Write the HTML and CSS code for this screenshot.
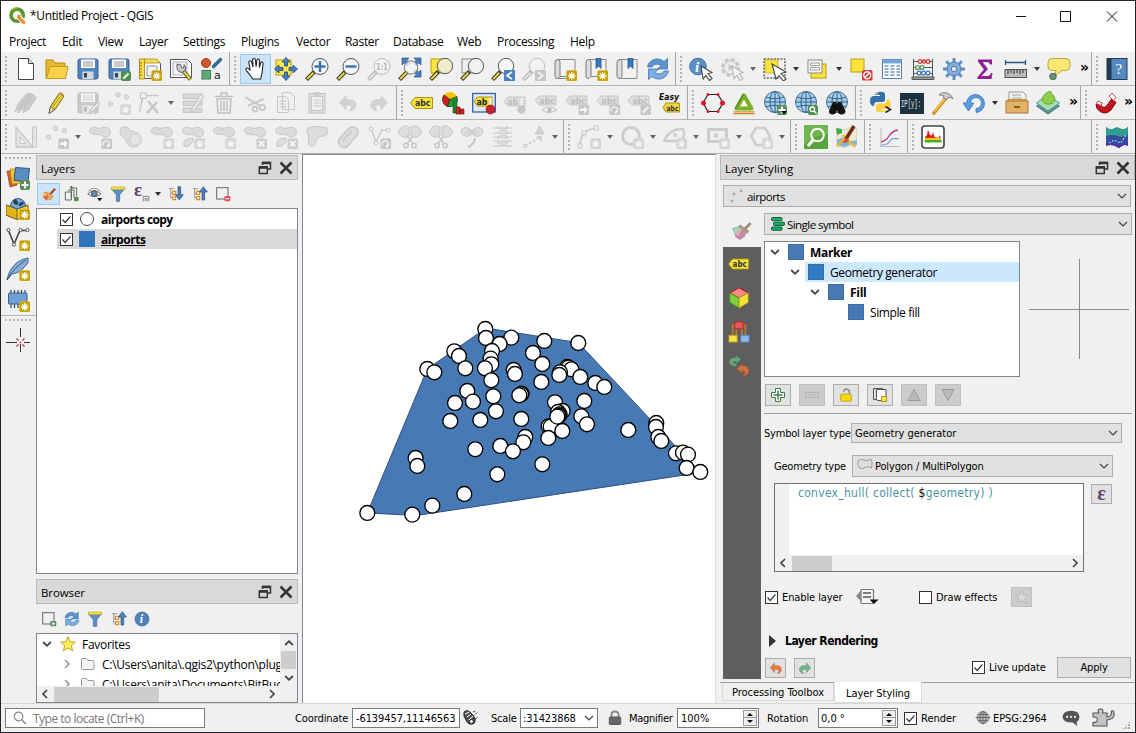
FILE: index.html
```html
<!DOCTYPE html>
<html lang="en">
<head>
<meta charset="utf-8">
<title>*Untitled Project - QGIS</title>
<link rel="stylesheet" href="styles.css">
</head>
<body>
<svg class="defs" aria-hidden="true">
<defs>
  <g id="badge-new"><rect x="13.5" y="13.5" width="10.5" height="10.5" rx="1.5" fill="#c4a000" stroke="#d9bb3a" stroke-width=".6"/><path d="M18.7 15v7.6M15 18.8h7.6M16 16.1l5.4 5.4M21.4 16.1L16 21.5" stroke="#fff" stroke-width="1.2"/></g>
  <g id="badge-arrow"><rect x="13.5" y="13.5" width="10.5" height="10.5" rx="1.5" fill="#777"/><path d="M15 17.5h4v-2.3l4 3.6-4 3.6V20h-4z" fill="#fff"/></g>
  <g id="badge-rot"><rect x="13.5" y="13.5" width="10.5" height="10.5" rx="1.5" fill="#777"/><path d="M15.6 20.5a3.2 3.2 0 1 1 3.6 1.6M19 22l1.8-2.6" fill="none" stroke="#fff" stroke-width="1.3"/></g>
  <g id="badge-x"><rect x="13.5" y="13.5" width="10.5" height="10.5" rx="1.5" fill="#888"/><path d="M16 16l5.4 5.4M21.4 16L16 21.4" stroke="#fff" stroke-width="2"/></g>
  <g id="badge-plus"><rect x="14" y="14" width="10" height="10" rx="2" fill="#5b8c5a"/><path d="M19 15.6v6.8M15.6 19h6.8" stroke="#fff" stroke-width="2"/></g>
  <g id="lens"><path d="M1.6 22.6L9.5 14.5" stroke="#333" stroke-width="4"/><path d="M2.2 22L8.4 15.8" stroke="#edd83f" stroke-width="2"/></g>
  <g id="blob"><path d="M1.500 5.500C2 2 6 1.500 9 3c3 1.500 5-1 8-.8 6 .3 7.500 8.300 2 9.800-4 .8-4.500-2-7.500-2.500-3-.3-4 .5-6.500-.3C2.500 8.500 1.200 7.500 1.500 5.500z" fill="#b5b5b5" stroke="#777"/></g>
  <g id="cursor"><path d="M12 9l11 6.500-4 1.300 4 4.700-2.500 2-3.700-5-2.600 3.500z" fill="#fff" stroke="#444" stroke-width="1.100"/></g>
  <g id="tag"><path d="M.5 12L5 6.500h17.500v11H5z" fill="#f7e33c" stroke="#a8930c"/></g>
  <g id="disk"><rect x="2" y="2" width="20" height="20" rx="2" fill="#4f84bd" stroke="#345f90"/><rect x="5" y="2.500" width="14" height="8.500" fill="#fff"/><path d="M7 5h10M7 7h10M7 9h10" stroke="#777" stroke-width=".8"/><rect x="6.500" y="14.500" width="11" height="7.500" fill="#d3d9df"/><rect x="8" y="16" width="3" height="4.500" fill="#345"/></g>
  <g id="reload"><path d="M1.500 10c1-7 10-11 16.500-5.500l3.500-3V12h-10l3.500-3.500c-4-2.500-7.500-1-9 1.500z" fill="#5b95d3" stroke="#35689f" stroke-width=".7"/><path d="M22.500 14c-1 7-10 11-16.500 5.500l-3.500 3V12h10L9 15.500c4 2.500 7.500 1 9-1.500z" fill="#7aaee2" stroke="#35689f" stroke-width=".7"/></g>
  <g id="globe"><circle cx="12" cy="11" r="10.500" fill="#a9cdea" stroke="#4c6e8e"/><path d="M12 .5v21M1.500 11h21M3 6q9 3.500 18 0M3 16q9-3.500 18 0" fill="none" stroke="#2f6286" stroke-width="1"/><ellipse cx="12" cy="11" rx="5" ry="10.500" fill="none" stroke="#2f6286" stroke-width="1"/></g>
  <g id="tree-lines"><path d="M1.500 4h8M4 4v14M4 11h5M4 18h5" fill="none" stroke="#888" stroke-width="1.200"/><rect x="7" y="8" width="4.500" height="4.500" fill="#fff" stroke="#e48a22" stroke-width="1.800"/><rect x="7" y="16" width="4.500" height="4.500" fill="#fff" stroke="#e48a22" stroke-width="1.800"/></g>
  <g id="dimtag"><path d="M1 9.500L5 5h17v9H5z" fill="#bbb" stroke="#777"/><text x="5.500" y="13" font-size="9" font-weight="700" fill="#555" textLength="15.500" lengthAdjust="spacingAndGlyphs">abc</text></g>

  <symbol id="i-logo" viewBox="0 0 24 24"><circle cx="11.500" cy="11.500" r="8.600" fill="none" stroke="#589632" stroke-width="5.200"/><path d="M5 4a9.500 9.500 0 0 1 6.500-2.500" fill="none" stroke="#97bf0d" stroke-width="2"/><path d="M12 12l10 10.500" stroke="#fff" stroke-width="7"/><path d="M12 11h5l-1.500 2L23 20.500v3h-4L12.500 16 11 17z" fill="#f08c2c"/></symbol>
  <symbol id="i-new" viewBox="0 0 24 24"><path d="M4.500 1.500h10l5 5v16h-15z" fill="#fff" stroke="#444"/><path d="M14.500 1.500v5h5" fill="#ddd" stroke="#444"/></symbol>
  <symbol id="i-open" viewBox="0 0 24 24"><path d="M1 3h7l2 3h10v4H5L2.500 21H1z" fill="#e8b931" stroke="#b98a12"/><path d="M5 9.500h18l-2.500 12H1.500z" fill="#fbd14b" stroke="#c79a1a"/></symbol>
  <symbol id="i-save" viewBox="0 0 24 24"><use href="#disk"/></symbol>
  <symbol id="i-saveas" viewBox="0 0 24 24"><use href="#disk"/><rect x="14" y="14" width="10" height="10" rx="2" fill="#4d8f4d"/><path d="M16.500 21.500l5-5" stroke="#fff" stroke-width="2"/></symbol>
  <symbol id="i-layout" viewBox="0 0 24 24"><path d="M1.500 2.500h17l4 4v15h-21z" fill="#fff" stroke="#555"/><path d="M6 2h13l3 4H6z" fill="#f5dc4c" stroke="#a48a17" stroke-width=".8"/><path d="M1.500 2h5v20h-5z" fill="#f5dc4c" stroke="#a48a17" stroke-width=".9"/><path d="M2 6h2M2 9h2M2 12h2M2 15h2M2 18h2" stroke="#776a20" stroke-width=".8"/><path d="M9 9h10v10H9z" fill="#eef4fa" stroke="#778" stroke-width=".8"/><use href="#badge-new"/></symbol>
  <symbol id="i-layoutmgr" viewBox="0 0 24 24"><path d="M1.500 2.500h17l4 4v14h-21z" fill="#fff" stroke="#555"/><rect x="4" y="5" width="14" height="13" fill="#eef4fa" stroke="#99a" stroke-width=".8"/><path d="M14 13.500l7.500 9" stroke="#6f6420" stroke-width="4"/><path d="M15 14.500l6 7.500" stroke="#e9d65c" stroke-width="2"/><path d="M8 7l4 1 .5 3 2.500-.5V7.500q3 2.500 1 6l-3 2q-4 0-5-4z" fill="#ccc" stroke="#555" stroke-width=".9"/></symbol>
  <symbol id="i-style" viewBox="0 0 24 24"><circle cx="6" cy="6" r="4.500" fill="#d4552a" stroke="#a43b16"/><path d="M13.500 9.500L20.500 2.500" stroke="#34699e" stroke-width="3.500" stroke-linecap="round"/><rect x="2" y="13.500" width="8.500" height="8.500" fill="#5fa878" stroke="#3c7a53"/><text x="14" y="22" font-size="11" fill="#222">a</text></symbol>
  <symbol id="i-hand" viewBox="0 0 24 24"><path d="M9 22.500C7 18 3.500 16 2 12.500c-.5-2 2-2.500 4.500 1L5 5c0-2 2.300-2.200 2.900-.3L9.500 10 9 2.500C9 .6 11.500.5 11.900 2.500l.7 7 .9-6.700c.3-1.800 2.600-1.500 2.600.3l-.1 7.400 1.500-5c.6-1.500 2.500-1 2.400.7L19 15c-.2 3-1.500 4.500-1.500 7.500z" fill="#fff" stroke="#222" stroke-width="1.100"/></symbol>
  <symbol id="i-pansel" viewBox="0 0 24 24"><rect x="2" y="3" width="15" height="15" fill="#fce94f" stroke="#b59c13"/><path d="M12 .5l4 4.500h-2.500v4h-3V5H8zM12 23.500L8 19h2.500v-4h3v4H16zM.5 12L5 8v2.500h4v3H5V16zM23.500 12L19 16v-2.500h-4v-3h4V8z" fill="#4b80bc" stroke="#1f4878" stroke-width=".8"/></symbol>
  <symbol id="i-zin" viewBox="0 0 24 24"><use href="#lens"/><circle cx="15" cy="9.500" r="8" fill="#f4f6f8" stroke="#555"/><path d="M15 4v11M9.500 9.500h11" stroke="#3a72b0" stroke-width="2.400"/></symbol>
  <symbol id="i-zout" viewBox="0 0 24 24"><use href="#lens"/><circle cx="15" cy="9.500" r="8" fill="#f4f6f8" stroke="#555"/><path d="M9.500 9.500h11" stroke="#3a72b0" stroke-width="2.400"/></symbol>
  <symbol id="i-z11" viewBox="0 0 24 24"><use href="#lens"/><circle cx="15" cy="9.500" r="8" fill="#f4f6f8" stroke="#555"/><text x="9" y="13" font-size="9" font-weight="700" fill="#444" textLength="12" lengthAdjust="spacingAndGlyphs">1:1</text></symbol>
  <symbol id="i-zfull" viewBox="0 0 24 24"><use href="#lens"/><path d="M4 1h7L8.800 3.200l3 3-2.600 2.600-3-3L4 8zM23 1v7l-2.200-2.200-3 3-2.600-2.600 3-3L16 1zM23 20h-7l2.200-2.200-3-3 2.600-2.600 3 3L23 13z" fill="#4b80bc" stroke="#2a5486" stroke-width=".7"/><circle cx="13" cy="10.500" r="6.700" fill="#f4f6f8" fill-opacity=".75" stroke="#777"/></symbol>
  <symbol id="i-zsel" viewBox="0 0 24 24"><rect x="2" y="2" width="12" height="14" fill="#fce43a" stroke="#b59c13"/><use href="#lens"/><circle cx="16" cy="9" r="7.700" fill="#efeccb" stroke="#555"/></symbol>
  <symbol id="i-zlay" viewBox="0 0 24 24"><rect x="2" y="2" width="12" height="14" fill="#eee" stroke="#888"/><use href="#lens"/><circle cx="16" cy="9" r="7.700" fill="#f1f1f1" stroke="#555"/></symbol>
  <symbol id="i-zlast" viewBox="0 0 24 24"><use href="#lens"/><circle cx="15" cy="9" r="7.700" fill="#f4f6f8" stroke="#555"/><rect x="13" y="13" width="11" height="11" fill="#4b80bc"/><path d="M21 15l-5 3.500 5 3.500" fill="none" stroke="#fff" stroke-width="1.700"/></symbol>
  <symbol id="i-znext" viewBox="0 0 24 24"><use href="#lens"/><circle cx="15" cy="9" r="7.700" fill="#f4f6f8" stroke="#555"/><rect x="13" y="13" width="11" height="11" fill="#777"/><path d="M16 15l5 3.500-5 3.500" fill="none" stroke="#fff" stroke-width="1.700"/></symbol>
  <symbol id="i-view" viewBox="0 0 24 24"><path d="M5 2.500h17v17H5z" fill="#f2f2f2" stroke="#888"/><path d="M5 2.500q-3 0-3 3v14q0 2 3 2l2-2v-14q0-3-2-3z" fill="#ddd" stroke="#777"/><path d="M5 21.500h10" stroke="#888"/><use href="#badge-new"/></symbol>
  <symbol id="i-bookmark" viewBox="0 0 24 24"><path d="M5 2.500h17v17H5z" fill="#f2f2f2" stroke="#888"/><path d="M5 2.500q-3 0-3 3v14q0 2 3 2l2-2v-14q0-3-2-3z" fill="#ddd" stroke="#777"/><path d="M12 1.500h5v10l-2.500-2.500-2.500 2.500z" fill="#3b79bd" stroke="#245489" stroke-width=".8"/><use href="#badge-new"/></symbol>
  <symbol id="i-bookmarks" viewBox="0 0 24 24"><path d="M5 2.500h17v19H5z" fill="#f2f2f2" stroke="#888"/><path d="M5 2.500q-3 0-3 3v14q0 2 3 2l2-2v-14q0-3-2-3z" fill="#ddd" stroke="#777"/><path d="M13 1.500h5v10l-2.500-2.500-2.500 2.500z" fill="#3b79bd" stroke="#245489" stroke-width=".8"/></symbol>
  <symbol id="i-reload" viewBox="0 0 24 24"><use href="#reload"/></symbol>
  <symbol id="i-ident" viewBox="0 0 24 24"><circle cx="9" cy="9.500" r="8.300" fill="#5b91c9" stroke="#3d6fa5"/><text x="6" y="15" font-size="15" font-style="italic" font-weight="700" class="serif" fill="#fff">i</text><use href="#cursor"/></symbol>
  <symbol id="i-action" viewBox="0 0 24 24"><circle cx="10.500" cy="10.500" r="8" fill="#ddd" stroke="#777" stroke-width="3" stroke-dasharray="4 2.300"/><circle cx="10.500" cy="10.500" r="6.500" fill="#e8e8e8" stroke="#777"/><path d="M8.500 7l6 3.500-6 3.500z" fill="#777"/><use href="#cursor"/></symbol>
  <symbol id="i-select" viewBox="0 0 24 24"><rect x="1" y="2" width="21" height="19" fill="none" stroke="#222" stroke-dasharray="2 1.300"/><rect x="2" y="3" width="13" height="13" fill="#fce43a" stroke="#b59c13" stroke-width=".6"/><path d="M9 7l14 8-5 1.500 5 5.500-2.500 2-4.500-5.500L13 22z" fill="#fff" stroke="#444" stroke-width="1.100"/></symbol>
  <symbol id="i-selform" viewBox="0 0 24 24"><rect x="5" y="7" width="15" height="14" fill="#fce43a" stroke="#b59c13"/><rect x="2" y="3" width="14" height="13" fill="#f7f7f7" stroke="#888"/><path d="M4.500 6h9v2.500h-9zM4.500 10.500h9V13h-9z" fill="#fff" stroke="#888" stroke-width=".8"/></symbol>
  <symbol id="i-desel" viewBox="0 0 24 24"><rect x="2" y="2" width="13" height="13" fill="#fce43a" stroke="#b59c13"/><rect x="13" y="13" width="10.500" height="10.500" rx="1.500" fill="#dc3a3a"/><circle cx="18.200" cy="18.200" r="3.500" fill="none" stroke="#fff" stroke-width="1.400"/><path d="M15.800 20.600l4.800-4.800" stroke="#fff" stroke-width="1.400"/></symbol>
  <symbol id="i-table" viewBox="0 0 24 24"><rect x="2.500" y="2.500" width="19" height="19" fill="#fff" stroke="#5780ad"/><path d="M2.500 2.500h19v4h-19z" fill="#78a6d6"/><path d="M4.500 9h4M4.500 12h4M4.500 15h4M4.500 18h4M10.500 9h4M10.500 12h4M10.500 15h4M10.500 18h4M16.500 9h3.500M16.500 12h3.500M16.500 15h3.500M16.500 18h3.500" stroke="#6b95c3" stroke-width="1.500"/></symbol>
  <symbol id="i-abacus" viewBox="0 0 24 24"><path d="M2.500 2v19M21.500 2v19M2.500 4.500h19M2.500 10.500h19M2.500 16.500h19" stroke="#555" fill="none"/><path d="M1 20h22v2.500H1z" fill="#999" stroke="#555"/><g fill="#fff" stroke-width="1.300"><g stroke="#c33"><circle cx="9" cy="4.500" r="1.800"/><circle cx="17" cy="4.500" r="1.800"/><circle cx="13" cy="4.500" r="1.500"/></g><g stroke="#4d9a5c"><circle cx="6.500" cy="10.500" r="1.900"/><circle cx="11" cy="10.500" r="1.900"/></g><g stroke="#3b79bd"><circle cx="8" cy="16" r="1.900"/><circle cx="12.500" cy="16" r="1.900"/><circle cx="17" cy="16" r="1.900"/></g></g></symbol>
  <symbol id="i-gear" viewBox="0 0 24 24"><path d="M12 1v22M1 12h22M4.200 4.200l15.600 15.600M19.800 4.200L4.200 19.800" stroke="#5f8fc6" stroke-width="3"/><circle cx="12" cy="12" r="7" fill="#86addb" stroke="#4b7db5"/><circle cx="12" cy="12" r="2.700" fill="#eee" stroke="#4b7db5"/></symbol>
  <symbol id="i-sigma" viewBox="0 0 24 24"><path d="M5 2.500h14v5h-1.800q-.7-2.500-3-2.500H9.500l5.500 7-6.500 7h6q2.500 0 3.500-3h1.500l-1 6H4.500v-2L11 12.500 5 4.500z" fill="#8d1f93"/></symbol>
  <symbol id="i-measure" viewBox="0 0 24 24"><path d="M1.500 5.500h20M1.500 3v5M21.500 3v5" stroke="#2b5583" stroke-width="1.300"/><rect x="1" y="12.500" width="21.500" height="8" fill="#bbb" stroke="#555"/><path d="M4 13v4M7 13v3M10 13v4M13 13v3M16 13v4M19 13v3" stroke="#333"/></symbol>
  <symbol id="i-tip" viewBox="0 0 24 24"><path d="M5 1.500h14q4 0 4 4v4q0 4-4 4h-4l-7 5.500 1-5.500H5q-4 0-4-4v-4q0-4 4-4z" fill="#fbe873" stroke="#b8a53b"/><circle cx="6" cy="19.500" r="3.300" fill="#6b9171" stroke="#496b4f"/></symbol>
  <symbol id="i-help" viewBox="0 0 24 24"><rect x="2" y="1.500" width="20" height="21" fill="#5588be" stroke="#243c57"/><rect x="2" y="1.500" width="4.500" height="21" fill="#25394e"/><text x="10.500" y="17" font-size="15" class="serif" fill="#fff">?</text></symbol>

  <symbol id="i-edits" viewBox="0 0 24 24"><path d="M1 21l3-8L13 2l3 2-4 8zM4 22l3-8 9-12 3 1.500-6 10.500zM9 22l2-7 8-11 3.500 2.500L15 18z" fill="#888" stroke="#666"/></symbol>
  <symbol id="i-pencil" viewBox="0 0 24 24"><path d="M4 22.500l1.500-7L14.500 2l4.500 3-9 13.500z" fill="#f0d93c" stroke="#6c6010"/><path d="M7.500 16.500L16.500 3.500" stroke="#a8941d"/><path d="M4 22.500l1.500-7 4.500 3z" fill="#e8d9b0" stroke="#555" stroke-width=".8"/><path d="M14.500 2q3-2.500 4.500 3z" fill="#d78f6d"/></symbol>
  <symbol id="i-savepen" viewBox="0 0 24 24"><use href="#disk"/><path d="M13 23l2-5 7-7 2 2-7 7z" fill="#ddd" stroke="#555"/></symbol>
  <symbol id="i-points" viewBox="0 0 24 24"><g fill="#bbb" stroke="#777"><circle cx="3.500" cy="13" r="2.200"/><circle cx="11" cy="4" r="2.200"/><circle cx="19.500" cy="6" r="2.200"/></g><use href="#badge-new"/></symbol>
  <symbol id="i-movepts" viewBox="0 0 24 24"><g fill="#bbb" stroke="#777"><circle cx="3.500" cy="12" r="2.200"/><circle cx="10.500" cy="3.500" r="2.200"/><circle cx="19.500" cy="5.500" r="2.200"/></g><use href="#badge-arrow"/></symbol>
  <symbol id="i-vertex" viewBox="0 0 24 24"><path d="M1.500 21L5 4.500h16" fill="none" stroke="#777" stroke-width="1.500"/><rect x="2.500" y="2" width="5.500" height="5.500" fill="#eee" stroke="#666"/><path d="M10 10l10 12M19 11l-10 11" stroke="#777" stroke-width="2.600"/></symbol>
  <symbol id="i-attr" viewBox="0 0 24 24"><path d="M2 3h19v4.500H2zM2 10h19v4.500H2zM2 17h19v4.500H2z" fill="#aaa" stroke="#777"/><path d="M11 18l9-15 3 2-9 14-4 2z" fill="#ddd" stroke="#666"/></symbol>
  <symbol id="i-trash" viewBox="0 0 24 24"><path d="M5 8h14l-1 14H6zM2.500 5.500h19M9 5V2h6v3M9 10v10M12 10v10M15 10v10" fill="none" stroke="#666" stroke-width="1.600"/></symbol>
  <symbol id="i-cut" viewBox="0 0 24 24"><path d="M2 6l15 8.500M5 14.500L21 8" stroke="#777" stroke-width="2"/><circle cx="19.500" cy="16.500" r="2.700" fill="none" stroke="#777" stroke-width="1.800"/><circle cx="12" cy="18" r="2.500" fill="none" stroke="#777" stroke-width="1.800"/></symbol>
  <symbol id="i-copy" viewBox="0 0 24 24"><path d="M8.500 1.500h8l4 4v13h-12zM3.500 5.500h8l3 3v13h-11z" fill="#eee" stroke="#777"/><path d="M6 10h6M6 13h6M6 16h6" stroke="#777"/></symbol>
  <symbol id="i-paste" viewBox="0 0 24 24"><rect x="4" y="2.500" width="16" height="19.500" fill="#bbb" stroke="#666"/><path d="M6.500 5.500h11v14h-11z" fill="#eee" stroke="#777"/><path d="M9 1h6v4H9z" fill="#888"/><path d="M9 9h7M9 12h7M9 15h7" stroke="#777"/></symbol>
  <symbol id="i-undo" viewBox="0 0 24 24"><path d="M9.500 3v5h5c4.500 0 7 3 7 6.500s-2 6.500-8 7c4-3 4-7 0-7h-4V20L2 11.500z" fill="currentColor" stroke="#777" stroke-width=".7"/></symbol>
  <symbol id="i-redo" viewBox="0 0 24 24"><path d="M14.500 3v5h-5c-4.500 0-7 3-7 6.500s2 6.500 8 7c-4-3-4-7 0-7h4V20L22 11.500z" fill="currentColor" stroke="#777" stroke-width=".7"/></symbol>
  <symbol id="i-abc" viewBox="0 0 24 24"><use href="#tag"/><text x="5" y="15.300" font-size="9.500" font-weight="700" fill="#333" textLength="15.500" lengthAdjust="spacingAndGlyphs">abc</text></symbol>
  <symbol id="i-chart" viewBox="0 0 24 24"><circle cx="9" cy="8.500" r="7.500" fill="#f8c300"/><path d="M9 8.500L3 4a7.500 7.500 0 0 0 3.500 11.500z" fill="#cf1d1d" stroke="#222" stroke-width=".7"/><path d="M9 8.500L6.500 15.500q7 1 10-6L16 5.500z" fill="#22a43c" stroke="#222" stroke-width=".7"/><path d="M12 9h4v13h-4z" fill="#1e8e36" stroke="#114f1f" stroke-width=".6"/><path d="M15 16h4v7h-4zM19 18h4v5h-4z" fill="#d32222" stroke="#611" stroke-width=".6"/></symbol>
  <symbol id="i-labsel" viewBox="0 0 24 24"><rect x=".7" y="2.500" width="22.600" height="18.500" fill="#e5e9ef" stroke="#2c62b4" stroke-width="1.300"/><path d="M2 10.500L5.500 6H20v9H5.500z" fill="#f7e33c" stroke="#a8930c"/><text x="4.500" y="14" font-size="9.500" font-weight="700" fill="#222" textLength="11" lengthAdjust="spacingAndGlyphs">ab</text><path d="M18.500 7v9" stroke="#fff" stroke-width="2"/><circle cx="18.500" cy="18.500" r="4.500" fill="#c8202a" stroke="#8a0f16" stroke-width=".6"/></symbol>
  <symbol id="i-labpin" viewBox="0 0 24 24"><path d="M1 10.500L5 6h17v9H5z" fill="#bbb" stroke="#777"/><text x="4.500" y="14" font-size="9.500" font-weight="700" fill="#555" textLength="11" lengthAdjust="spacingAndGlyphs">ab</text><path d="M18.500 7v9" stroke="#fff" stroke-width="2"/><circle cx="18.500" cy="18.500" r="4.200" fill="#777"/></symbol>
  <symbol id="i-labeye" viewBox="0 0 24 24"><use href="#dimtag"/><path d="M8 19q7-6 15 0-8 5-15 0z" fill="#eee" stroke="#555"/><circle cx="15.500" cy="19" r="2.200" fill="#555"/></symbol>
  <symbol id="i-labmove" viewBox="0 0 24 24"><use href="#dimtag"/><use href="#badge-arrow"/></symbol>
  <symbol id="i-labrot" viewBox="0 0 24 24"><use href="#dimtag"/><use href="#badge-rot"/></symbol>
  <symbol id="i-labedit" viewBox="0 0 24 24"><use href="#dimtag"/><rect x="13.500" y="13.500" width="10.500" height="10.500" rx="1.500" fill="#777"/><path d="M16 21.500l5.500-5.500" stroke="#fff" stroke-width="2"/></symbol>
  <symbol id="i-easy" viewBox="0 0 24 24"><text x="1" y="9" font-size="9" font-weight="700" font-style="italic" fill="#111" textLength="20" lengthAdjust="spacingAndGlyphs">Easy</text><path d="M5 16.500l3-4.500h13.500v9H8z" fill="#f2d53c" stroke="#a8930c"/><text x="8.500" y="19.500" font-size="7.500" font-weight="700" fill="#333" textLength="12" lengthAdjust="spacingAndGlyphs">abc</text></symbol>
  <symbol id="i-hex" viewBox="0 0 24 24"><path d="M2 12l5-8.500h10l5 8.500-5 8.500H7z" fill="none" stroke="#222" stroke-width="1.200"/><g fill="#e0172c"><circle cx="2.500" cy="12" r="2.500"/><circle cx="21.500" cy="12" r="2.500"/><circle cx="7" cy="3.500" r="1.500"/><circle cx="17" cy="3.500" r="1.500"/><circle cx="7" cy="20.500" r="1.500"/><circle cx="17" cy="20.500" r="1.500"/></g></symbol>
  <symbol id="i-tri" viewBox="0 0 24 24"><path d="M12 4.500L4.500 17.500h15z" fill="#f4f8e8" stroke="#7fae28" stroke-width="4" stroke-linejoin="round"/><path d="M11.500 3l-8 14.500" stroke="#4f8a1e" stroke-width="1.500"/><path d="M1.500 20.700h21" stroke="#b7a93a"/><path d="M1.500 22.500h21" stroke="#ee7b1b" stroke-width="1.600"/></symbol>
  <symbol id="i-globeadd" viewBox="0 0 24 24"><use href="#globe"/><use href="#badge-plus"/><path d="M18 20h6l-3 3.500z" fill="#000"/></symbol>
  <symbol id="i-globefind" viewBox="0 0 24 24"><use href="#globe"/><rect x="14" y="14" width="10" height="10" rx="2" fill="#4d8f4d"/><circle cx="18.300" cy="18.300" r="2.300" fill="none" stroke="#fff" stroke-width="1.300"/><path d="M20 20l2.500 2.500" stroke="#fff" stroke-width="1.500"/></symbol>
  <symbol id="i-globebin" viewBox="0 0 24 24"><use href="#globe"/><path d="M4 20L8 11h3l1 2 1-2h3l4.500 9q0 3.500-4 3.500-3.500 0-4-4h-1q-.5 4-4 4Q4 23.500 4 20z" fill="#111"/></symbol>
  <symbol id="i-python" viewBox="0 0 24 24"><path d="M10 1q6-1 6 2.500V9q0 2-2.500 2H8q-3 0-3 4-4 0-4-5t4-5h6V4H6Q6 1.500 10 1z" fill="#3471a8"/><path d="M13 21q-6 1-6-2.500V15q0-2.500 2.500-2.500H15q3 0 3-4.500 3.500 0 3.500 5t-3.500 5h-6v1h5q0 1.500-4 2z" fill="#ffcf3e"/><circle cx="8" cy="3" r=".8" fill="#fff"/><path d="M16.500 15.500l5 3-5 3" fill="none" stroke="#222" stroke-width="1.500"/></symbol>
  <symbol id="i-ipy" viewBox="0 0 24 24"><rect x="0" y="2" width="24" height="21" fill="#1d3240"/><text x="1" y="16" font-size="10.500" class="mono" fill="#e8e8e8" textLength="20" lengthAdjust="spacingAndGlyphs">IP[y]:</text></symbol>
  <symbol id="i-hammer" viewBox="0 0 24 24"><path d="M3 22L15 7" stroke="#cf921f" stroke-width="3.600" stroke-linecap="round"/><path d="M3.500 20.500L14.500 7" stroke="#f7c651" stroke-width="1.200"/><path d="M8 4q4-4 9-1.500 4 1.500 5 5.500-3-2.500-5-1.500l-1.500 2L12 6.500l1-1.500q-2.500-1-5-1z" fill="#ccc" stroke="#777" stroke-width=".9"/></symbol>
  <symbol id="i-rotate" viewBox="0 0 24 24"><path d="M1 12h3.500A9 9 0 1 1 14 21.500v-4A5.500 5.500 0 1 0 8.500 12H12l-5.500 8z" fill="#5b9be0" stroke="#3474bb" stroke-width=".8"/></symbol>
  <symbol id="i-drawer" viewBox="0 0 24 24"><path d="M4 1h14l3 3v8H4z" fill="#f3f3f3" stroke="#999"/><path d="M7 4h9M7 7h10" stroke="#8fb08f"/><rect x="1" y="10" width="22" height="12" fill="#e2b267" stroke="#ab7b33"/><path d="M1 10l2-2h18l2 2z" fill="#c6924a"/><rect x="9" y="15" width="6" height="2" fill="#8a5d20"/></symbol>
  <symbol id="i-iface" viewBox="0 0 24 24"><path d="M.5 15L11 8l12.500 7L12 23z" fill="#5f8f9a" stroke="#477"/><path d="M.5 12L11 4l12.500 8L12 20z" fill="#a8ddb0" stroke="#599"/><path d="M6 9q1-7 9-9-1 2 3 5 3 6-4 8-6 1-8-4z" fill="#8fcf4a" stroke="#6aa834"/></symbol>
  <symbol id="i-magnet" viewBox="0 0 24 24"><path d="M2 13q0 5 4 7.500 6 3.500 11-1.500l5-7.500-4.500-3.500-5 7q-2 2-4 1t-1.500-3.500z" fill="#c5141b" stroke="#7e0b10"/><path d="M2 12.500l2-2.500 4.500 2-1.500 2.500zM15 5l3-3 4 4.500-2.500 3z" fill="#fff" stroke="#c33" stroke-width=".9"/></symbol>

  <symbol id="i-ruler" viewBox="0 0 24 24"><path d="M2 2v20h17z" fill="#d8cdc0" stroke="#777" stroke-width="1.300"/><path d="M6 12v6.500h6z" fill="#f0f0f0" stroke="#777"/><path d="M18.500 2h4v20h-4z" fill="#d6d6d6" stroke="#777"/><path d="M18.500 5h2M18.500 8h2M18.500 11h2M18.500 14h2" stroke="#777"/></symbol>
  <symbol id="i-brot" viewBox="0 0 24 24"><use href="#blob"/><use href="#badge-rot"/></symbol>
  <symbol id="i-simpl" viewBox="0 0 24 24"><path d="M1 6q0-5 6-4 3 0 4 4l5 1q6 2 6 8t-7 7-8-8q-6-2-6-8z" fill="#b9b9b9" stroke="#777"/><path d="M10 14l3-5h7l3 5-3 6h-7z" fill="#ccc" stroke="#888"/></symbol>
  <symbol id="i-ring" viewBox="0 0 24 24"><use href="#blob"/><path d="M5 6.500Q6 4 9 5q2.500 1-1 2.500-2.500.5-3-1z" fill="#fff" stroke="#777"/><use href="#badge-new"/></symbol>
  <symbol id="i-part" viewBox="0 0 24 24"><use href="#blob"/><path d="M3 21q-2-8 9-8 1 4-3 7-3 3-6 1z" fill="#bbb" stroke="#777"/><use href="#badge-new"/></symbol>
  <symbol id="i-delring" viewBox="0 0 24 24"><use href="#blob"/><path d="M5 6.500Q6 4 9 5q2.500 1-1 2.500-2.500.5-3-1z" fill="#fff" stroke="#777"/><use href="#badge-x"/></symbol>
  <symbol id="i-delpart" viewBox="0 0 24 24"><use href="#blob"/><path d="M3 21q-2-8 9-8 1 4-3 7-3 3-6 1z" fill="#bbb" stroke="#777"/><use href="#badge-x"/></symbol>
  <symbol id="i-reshape" viewBox="0 0 24 24"><path d="M3 3q8-3 19 0 2 8-4 8-7 0-8 9-5 4-7-2 2-7-1-10-1-3 1-5z" fill="#b9b9b9" stroke="#777"/></symbol>
  <symbol id="i-offset" viewBox="0 0 24 24"><path d="M4 21q-4-5 2-10l6-7q5-4 9 0 3 4-2 9-3 2-5 6-5 6-10 2z" fill="#b9b9b9" stroke="#777" stroke-width="1.400"/><path d="M7 17q1-4 4-6l5-5" fill="none" stroke="#888" stroke-width="2"/></symbol>
  <symbol id="i-split" viewBox="0 0 24 24"><path d="M4 4l5 13L15 5h6" fill="none" stroke="#777" stroke-width="1.300"/><g fill="#eee" stroke="#777"><circle cx="4" cy="4" r="2"/><circle cx="9" cy="18" r="2"/><circle cx="21" cy="5" r="2"/></g><use href="#badge-rot"/></symbol>
  <symbol id="i-splitf" viewBox="0 0 24 24"><path d="M11 2Q6-1 2 4t3 8q4 1 6-1zM13 2q5-3 9 2t-3 8q-4 1-6-1z" fill="#b9b9b9" stroke="#777"/><path d="M9 10l6 9M15 10l-6 9" stroke="#777" stroke-width="1.500"/><circle cx="8" cy="20.500" r="2.200" fill="none" stroke="#777" stroke-width="1.500"/><circle cx="16" cy="20.500" r="2.200" fill="none" stroke="#777" stroke-width="1.500"/></symbol>
  <symbol id="i-merge" viewBox="0 0 24 24"><path d="M11 5Q7 1 3 3t0 7q3 3 8 0zM13 5q4-4 8-2t0 7q-3 3-8 0z" fill="#b9b9b9" stroke="#777"/><path d="M5 8h12M8 6h8" stroke="#777"/><path d="M8 22q6-2 7-9" fill="none" stroke="#888" stroke-width="2.500"/></symbol>
  <symbol id="i-mergea" viewBox="0 0 24 24"><path d="M2 3h19M2 8h19M2 12h19M2 16h19M2 21h19" stroke="#777" stroke-width="1.100"/><path d="M7 1v21M16 1v21" stroke="#888" stroke-width="1.500" stroke-dasharray="3 2"/><path d="M9 3h6v3H9zM9 10h6v3H9zM9 17h6v3H9z" fill="#bbb" stroke="#777" stroke-width=".7"/></symbol>
  <symbol id="i-rotsym" viewBox="0 0 24 24"><path d="M13 9l4.500-8L22 9z" fill="#999" stroke="#777"/><path d="M3 21L17 13" stroke="#888" stroke-dasharray="3 1.500" stroke-width="1.600"/><path d="M14 11h6v6z" fill="#999"/><circle cx="3" cy="21" r="1.700" fill="#eee" stroke="#777"/></symbol>
  <symbol id="i-curve" viewBox="0 0 24 24"><path d="M3 21Q3 5 19 3" fill="none" stroke="#777" stroke-width="1.500"/><g fill="#eee" stroke="#777"><rect x="1" y="19" width="4" height="4"/><rect x="5" y="6" width="4" height="4"/><rect x="17" y="1" width="4" height="4"/></g><use href="#badge-new"/></symbol>
  <symbol id="i-circle" viewBox="0 0 24 24"><circle cx="11" cy="11" r="8.500" fill="none" stroke="#888" stroke-width="3"/><use href="#badge-new"/></symbol>
  <symbol id="i-ellipse" viewBox="0 0 24 24"><path d="M1 16Q7 3 20 4q4 10-6 12z" fill="none" stroke="#888" stroke-width="2.500"/><circle cx="12" cy="10" r="2" fill="#888"/><use href="#badge-new"/></symbol>
  <symbol id="i-rect" viewBox="0 0 24 24"><rect x="2.500" y="4.500" width="18" height="12" fill="none" stroke="#888" stroke-width="3"/><rect x="8" y="8.500" width="4" height="4" fill="#888"/><use href="#badge-new"/></symbol>
  <symbol id="i-poly" viewBox="0 0 24 24"><path d="M2 11l5-8h9l5 8-5 9H7z" fill="none" stroke="#888" stroke-width="2.600"/><use href="#badge-new"/></symbol>
  <symbol id="i-qfind" viewBox="0 0 24 24"><rect width="24" height="24" fill="#58a43c"/><path d="M0 0h24v9Q10 10 0 20z" fill="#84c05e" opacity=".6"/><circle cx="13.500" cy="10" r="6.300" fill="none" stroke="#fff" stroke-width="2"/><path d="M9 15l-5 6" stroke="#fff" stroke-width="3"/></symbol>
  <symbol id="i-mapbrush" viewBox="0 0 24 24"><path d="M2 4l7 1 7-3 6 2-1 17-5-1-7 3-7-2z" fill="#efe8d0" stroke="#c9be9f" stroke-width=".6"/><path d="M1 3l6 1v4l-5 2z" fill="#3fae49"/><path d="M2 15l6-3 5 5 9-2v5l-6-1-6 3-8-2z" fill="#7fb2dc"/><path d="M2 21L15 8M8 10l12 12" stroke="#f0b429" stroke-width="2.200"/><path d="M11 14l8-13" stroke="#6e2c18" stroke-width="3.500"/><path d="M8 18q0-4 4-5l2 2q-1 3-6 3z" fill="#d9542b"/></symbol>
  <symbol id="i-profile" viewBox="0 0 24 24"><path d="M3 3v19M2 21.500h20" stroke="#bbb"/><path d="M3 17q5-1 8-6t9-6" fill="none" stroke="#c0347a" stroke-width="1.300"/><path d="M3 20q7 0 9-4t9-2" fill="none" stroke="#7a9fe0" stroke-width="1.200"/></symbol>
  <symbol id="i-spectrum" viewBox="0 0 24 24"><rect x="1" y="1" width="22" height="22" rx="3" fill="#fff" stroke="#444" stroke-width="1.600"/><path d="M4 14v-2l2-2 1-5.500L9 10l2 .5L12 7l1.500 5 4 1 1.500-3 1 4z" fill="#e2201b"/><path d="M4 13h16v2H4z" fill="#f7c21a"/><path d="M3.500 15h17v2.500h-17z" fill="#43b11f"/></symbol>
  <symbol id="i-mapblue" viewBox="0 0 24 24"><path d="M1 2q4 4 8 1.500 3-2 6 0 4 2 8-1.500v19q-3-2-6 0l-3 2-4-2q-5-2-9 0z" fill="#334f9e"/><path d="M1 2q4 4 8 1.500 3-2 6 0 4 2 8-1.500v7q-5 4-10 2T1 11z" fill="#2f9f92"/><path d="M4 18l5-3 7 3 5-8" fill="none" stroke="#bfe0ff" stroke-width="1.200" stroke-dasharray="1.500 2"/><path d="M1 17q8 4 22 0v4q-3-2-6 0l-3 2-4-2q-5-2-9 0z" fill="#4a36a5"/></symbol>

  <symbol id="i-addlayer" viewBox="0 0 24 24"><path d="M1 5l10 0 0 14-7 2z" fill="#d4622b" stroke="#8d3c15" stroke-width=".7"/><path d="M4 3l12 0-1 14-9 1z" fill="#f0c530" stroke="#a98512" stroke-width=".7"/><path d="M9.500 1.500l14 1-1.500 13-14-1z" fill="#5b8cc2" stroke="#2d5788"/><use href="#badge-plus"/></symbol>
  <symbol id="i-box" viewBox="0 0 24 24"><path d="M0 9l11 4 11-4v10l-11 4.500L0 19z" fill="#f6d02c" stroke="#7c6710"/><path d="M11 13v10.500L0 19V9z" fill="#e0b51c" stroke="#7c6710"/><path d="M4.500 10a7.500 7.500 0 1 1 15 0L11 13z" fill="#7da5ce" stroke="#3c5f87"/><path d="M7 5q3-4 4 0 3 2 0 4-4-1-4-4zM13 8q3-4 5-1-2 4-5 3z" fill="#26415f"/><use href="#badge-new"/></symbol>
  <symbol id="i-newshp" viewBox="0 0 24 24"><path d="M2.500 3.500L8 17l6-13.500h7" fill="none" stroke="#444" stroke-width="1.600"/><g fill="#fff" stroke="#555"><circle cx="2.500" cy="3" r="1.600"/><circle cx="8" cy="17.500" r="1.600"/><circle cx="14.500" cy="3" r="1.600"/><circle cx="21.500" cy="3" r="1.600"/></g><use href="#badge-new"/></symbol>
  <symbol id="i-feather" viewBox="0 0 24 24"><path d="M1 23q1-7 5-12Q11 3 22 1q1 6-4 9-2 5-12 7z" fill="#88afd9" stroke="#3c6592"/><path d="M1 23Q8 10 20 3" fill="none" stroke="#35597f"/><use href="#badge-new"/></symbol>
  <symbol id="i-chip" viewBox="0 0 24 24"><path d="M5 2v18M8.500 2v18M12 2v18M15.500 2v18M19 2v18" stroke="#345" stroke-width="1.200"/><rect x="2.500" y="5" width="18.500" height="11" rx="1" fill="#6f9fd4" stroke="#375f8c"/><use href="#badge-new"/></symbol>
  <symbol id="i-cross" viewBox="0 0 24 24"><path d="M14.500 0v9M14.500 16v8M0 14.500h11M18 14.500h6" stroke="#333"/><path d="M10.500 10.500l2 2M18.500 10.500l-2 2M10.500 18.500l2-2M18.500 18.500l-2-2" stroke="#b33" stroke-width="1.200"/><path d="M13.500 14.500h2M14.500 13.500v2" stroke="#c55"/></symbol>

  <symbol id="i-brushy" viewBox="0 0 24 24"><path d="M13 14l9-10" stroke="#a8452a" stroke-width="3.200"/><path d="M5 10l5-1 9 6-4 6-5-2z" fill="#f0a35c" stroke="#b8843a" stroke-width=".8"/><path d="M1 12l8 0 4 7-4 2z" fill="#f4d44a"/><path d="M3 16l8-3 1 5-3 4z" fill="#e8654a"/></symbol>
  <symbol id="i-group" viewBox="0 0 24 24"><path d="M2 9h9v12H2zM6 6h9v12M10 3h9v12" fill="none" stroke="#666" stroke-width="1.500"/><path d="M11 1v17M13 3l-2-3-2 3" fill="none" stroke="#4b6b4b" stroke-width="1.500"/><rect x="15" y="16" width="7" height="7" rx="2" fill="#5b8c5a"/></symbol>
  <symbol id="i-eye" viewBox="0 0 24 24"><path d="M1 12Q11 2 21 12 11 20 1 12z" fill="#eee" stroke="#666" stroke-width="1.300"/><circle cx="11" cy="11.500" r="4.500" fill="#6689ad" stroke="#333"/><path d="M2 8Q11-1 20 8" fill="none" stroke="#888" stroke-width="1.400"/><path d="M15 18h8l-4 5z" fill="#111"/></symbol>
  <symbol id="i-filter" viewBox="0 0 24 24"><path d="M2 4h20l-7.500 9v10h-5V13z" fill="#5d8fc6" stroke="#3a6797"/><path d="M2 1.500h20v4H2z" fill="#f8df3f" stroke="#b09a1e" stroke-width=".8"/></symbol>
  <symbol id="i-epsf" viewBox="0 0 24 24"><text x="0" y="15" font-size="28" font-weight="700" fill="#5d4668" class="serif">ε</text><path d="M14 23v-7.500h8V23M17 23v-4h2.500v4" fill="none" stroke="#999" stroke-width="1.800"/></symbol>
  <symbol id="i-expand" viewBox="0 0 24 24"><use href="#tree-lines"/><path d="M15 1h4v12h4l-6 8-6-8h4z" fill="#4b80bc" stroke="#24507f"/></symbol>
  <symbol id="i-collapse" viewBox="0 0 24 24"><use href="#tree-lines"/><path d="M15 21h4V9h4l-6-8-6 8h4z" fill="#4b80bc" stroke="#24507f"/></symbol>
  <symbol id="i-remove" viewBox="0 0 24 24"><rect x="2.500" y="2.500" width="17" height="17" fill="none" stroke="#666" stroke-width="1.500"/><rect x="14" y="15" width="9" height="8" rx="2" fill="#e24f5a"/><path d="M16 19h5" stroke="#fff" stroke-width="1.700"/></symbol>
  <symbol id="i-addsel" viewBox="0 0 24 24"><rect x="2.500" y="2.500" width="17" height="17" fill="none" stroke="#666" stroke-width="1.500"/><rect x="14" y="15" width="9" height="8" rx="2" fill="#5b8c5a"/><path d="M18.500 16.500v5M16 19h5" stroke="#fff" stroke-width="1.500"/></symbol>
  <symbol id="i-info" viewBox="0 0 24 24"><circle cx="12" cy="12" r="10.500" fill="#4f82b8" stroke="#37648f"/><text x="8.500" y="18.500" font-size="18" font-style="italic" font-weight="700" class="serif" fill="#fff">i</text></symbol>
  <symbol id="i-float" viewBox="0 0 14 14"><path d="M4.500 4V1.500h8v6.500H10" fill="none" stroke="#333" stroke-width="1.500"/><path d="M4 2h9" stroke="#333" stroke-width="2.400"/><rect x="1.300" y="6" width="8" height="6.500" fill="none" stroke="#333" stroke-width="1.500"/><path d="M1 6.500h9" stroke="#333" stroke-width="2.600"/></symbol>
  <symbol id="i-close" viewBox="0 0 14 14"><path d="M1.500 1.500l11 11M12.500 1.500l-11 11" stroke="#333" stroke-width="2.500"/></symbol>
  <symbol id="i-check" viewBox="0 0 13 13"><rect x=".5" y=".5" width="12" height="12" fill="#fff" stroke="#333"/><path d="M2.500 6.500l2.700 3L10.500 3.300" fill="none" stroke="#333" stroke-width="1.200"/></symbol>
  <symbol id="i-uncheck" viewBox="0 0 13 13"><rect x=".5" y=".5" width="12" height="12" fill="#fff" stroke="#333"/></symbol>
  <symbol id="i-down" viewBox="0 0 10 10"><path d="M1 3l4 4 4-4" fill="none" stroke="currentColor" stroke-width="1.200"/></symbol>
  <symbol id="i-chev" viewBox="0 0 10 10"><path d="M1.200 3L5 6.800 8.800 3" fill="none" stroke="#444" stroke-width="1.800"/></symbol>
  <symbol id="i-right" viewBox="0 0 10 10"><path d="M3 1l4 4-4 4" fill="none" stroke="currentColor" stroke-width="1.700"/></symbol>
  <symbol id="i-folder" viewBox="0 0 16 14"><path d="M1.500 2.500q0-1 1-1h4l1.500 2h5q1 0 1 1v7q0 1-1 1h-10.500q-1 0-1-1z" fill="#f4f4f4" stroke="#999"/></symbol>
  <symbol id="i-star" viewBox="0 0 16 16"><path d="M8 .8l2.100 4.900 5.300.4-4 3.500 1.200 5.200L8 12l-4.600 2.800 1.200-5.200-4-3.500 5.300-.4z" fill="#ffee55" stroke="#b09a2a" stroke-width=".9"/></symbol>
  <symbol id="i-rainbow" viewBox="0 0 24 24"><path d="M15 12l7.500-7.500" stroke="#9c8a6a" stroke-width="3"/><path d="M11 6l10 7-2 3-11-7z" fill="#a89a80"/><path d="M2 10l7-2 3 2-3 9-4-2z" fill="#8fc4dc"/><path d="M6 9l4 1-3 9-3-3z" fill="#a9d6a0"/><path d="M10 9.500l4 2.500-4 9-4-3z" fill="#e0b0b8"/><path d="M13 11l5 4-2 4-5 4-3-2z" fill="#bb8fa0"/><path d="M5 16l5 3 2 4-6-3z" fill="#d07ab8"/></symbol>
  <symbol id="i-cube" viewBox="0 0 24 24"><path d="M12 1l10 5.500L12 12 2 6.500z" fill="#f58a8a" stroke="#c11"/><path d="M2 6.500L12 12v11L2 17z" fill="#79d13b" stroke="#4b8d1c"/><path d="M22 6.500L12 12v11l10-6z" fill="#f8e13a" stroke="#b19b17"/></symbol>
  <symbol id="i-blocks" viewBox="0 0 24 24"><path d="M5 16V5h14v11M9 8v11M15 8v11" fill="none" stroke="#c87a2a" stroke-width="1.800"/><rect x="7.500" y="1" width="9" height="7.500" fill="#e85858" stroke="#b52a2a"/><rect x="1" y="15.500" width="9" height="7.500" fill="#fbe14a" stroke="#b2991c"/><rect x="14" y="15.500" width="9" height="7.500" fill="#8ab8ea" stroke="#5685b5"/></symbol>
  <symbol id="i-history" viewBox="0 0 24 24"><path d="M9 12.500q-8-.5-7.500-5.500.5-4.500 7.500-4V.5l5 4.500-5 4.500V7Q5.500 6.500 5.500 8t3.500 1.500z" fill="#68a583" stroke="#438a5d" stroke-width=".7"/><path d="M14 11.500q8-.5 8.500 5.500 0 5.500-6.500 6 3-2.500 2.500-5-1-1.500-3-1v2.500L9.500 15l5-4z" fill="#d3703d" stroke="#b9561f" stroke-width=".7"/></symbol>
  <symbol id="i-stack" viewBox="0 0 14 14"><g fill="#19b06b" stroke="#0b5a38"><rect x=".5" y=".5" width="10.500" height="3.200" rx="1"/><rect x="2.500" y="5.200" width="11" height="3.200" rx="1"/><rect x=".5" y="10" width="10.500" height="3.200" rx="1"/></g></symbol>
  <symbol id="i-dots" viewBox="0 0 14 14"><g fill="none" stroke="#888" stroke-width=".8"><circle cx="2" cy="12" r="1"/><circle cx="4" cy="5" r="1"/><circle cx="11" cy="2" r="1"/></g></symbol>
  <symbol id="i-plus" viewBox="0 0 14 14"><path d="M4.500.5h5v4h4v5h-4v4h-5v-4h-4v-5h4z" fill="#fff" stroke="#3f7d4c"/><path d="M7 2.500v9M2.500 7h9" stroke="#3f7d4c" stroke-width="1.500"/></symbol>
  <symbol id="i-minus" viewBox="0 0 14 14"><path d="M.5 4.500h13v5H.5z" fill="#ccc" stroke="#b4b4b4"/><path d="M2.500 7h9" stroke="#b4b4b4"/></symbol>
  <symbol id="i-unlock" viewBox="0 0 14 16"><path d="M4 4Q5.500.5 8.500 1.500T11 7" fill="none" stroke="#8a8f96" stroke-width="1.800"/><rect x="1" y="7" width="12" height="8" rx="1" fill="#fbd90f" stroke="#b79c12"/></symbol>
  <symbol id="i-dup" viewBox="0 0 14 14"><path d="M.5.500h9v11h-9z" fill="#ddd" stroke="#555"/><path d="M3.500 1.500h9.500v11h-8q-1.500 0-1.500-1.500z" fill="#fafafa" stroke="#555"/><rect x="8.500" y="8.500" width="5" height="5" fill="#fbe14a" stroke="#b2991c"/></symbol>
  <symbol id="i-up3" viewBox="0 0 14 14"><path d="M7 1.500l6 11H1z" fill="#b9b9b9" stroke="#9a9a9a"/></symbol>
  <symbol id="i-dn3" viewBox="0 0 14 14"><path d="M7 12.500l6-11H1z" fill="#b9b9b9" stroke="#9a9a9a"/></symbol>
  <symbol id="i-polyg" viewBox="0 0 16 12"><path d="M1 3q2-3 6-1 4 2 7-1 2 3 .5 9-3-2-6-1-3 3-6 1Q0 7 1 3z" fill="#ddd" stroke="#999"/></symbol>
  <symbol id="i-ddo" viewBox="0 0 24 20"><path d="M6 2.500h10.500q1 0 1 1v12q0 1-1 1H6q-1 0-1-1v-12q0-1 1-1z" fill="#f4f4f4" stroke="#777" stroke-width="1.200"/><path d="M0 9l5-5.500v11z" fill="#888"/><path d="M7 6h8M7 10h8" stroke="#555" stroke-width="1.600"/><path d="M13.500 12.500h9L18 17z" fill="#111"/></symbol>
  <symbol id="i-mouse" viewBox="0 0 16 16"><path d="M1 2q4-3 7 1l4 5q1 5-2 6-4 1-6-2L1 6z" fill="#555" stroke="#222"/><path d="M2 4l4-2M4 7l4-3M6 10l4-4" stroke="#fff"/><circle cx="8.500" cy="11.500" r="2" fill="#fff" stroke="#222"/><path d="M10 6l5-4M12 9l3-2M10 2l3-1" stroke="#444" stroke-dasharray="2 1"/></symbol>
  <symbol id="i-lock" viewBox="0 0 14 16"><path d="M3.500 8V4.500q0-3 3.500-3t3.500 3V8" fill="none" stroke="#888" stroke-width="1.800"/><rect x="1.300" y="7" width="11.400" height="7.500" rx="1" fill="#666" stroke="#555"/></symbol>
  <symbol id="i-crs" viewBox="0 0 16 16"><circle cx="8" cy="7.500" r="6" fill="#bbb" stroke="#888"/><path d="M8 1.500v13M.5 7.500h15M3 4.500h10M3 10.500h10" stroke="#666" fill="none" stroke-width=".9"/><ellipse cx="8" cy="7.500" rx="3" ry="6" fill="none" stroke="#666"/></symbol>
  <symbol id="i-bubble" viewBox="0 0 16 16"><path d="M8 1.500q7.500.5 7.500 5.500 0 3-2.500 4.500l.5 3.500-4-3Q.5 12 .5 7T8 1.500z" fill="#555"/><g fill="#eee"><circle cx="4.500" cy="7" r="1"/><circle cx="8" cy="7" r="1"/><circle cx="11.500" cy="7" r="1"/></g></symbol>
  <symbol id="i-puzzle" viewBox="0 0 24 20"><path d="M1 5h5.500q-1.500-4 2-4t2 4H15v4q4 0 4.500-4-1-3 2-2 2.500 7-4 8.500l-2.500.5v6H1v-3.500q4.500 0 4.500-2.800T1 9z" fill="#c4c4c4" stroke="#555" stroke-width="1.100"/></symbol>
  <circle id="p" r="22.300" fill="#fff" stroke="#000" stroke-width="4"/>
</defs>
</svg>

<div class="window">
  <header class="title">
    <svg class="logo"><use href="#i-logo"/></svg><span class="title-text">*Untitled Project - QGIS</span>
    <svg class="winbtns" viewBox="0 0 120 28"><path d="M4 14.500h10M48.500 9.500h10v10h-10zM95 9.500l10 10M105 9.500l-10 10" fill="none" stroke="#111"/></svg>
  </header>
  <nav class="menu"><span>Project</span><span>Edit</span><span>View</span><span>Layer</span><span>Settings</span><span>Plugins</span><span>Vector</span><span>Raster</span><span>Database</span><span>Web</span><span>Processing</span><span>Help</span></nav>

  <div class="row">
    <div class="tb w229"><svg><use href="#i-new"/></svg><svg><use href="#i-open"/></svg><svg><use href="#i-save"/></svg><svg><use href="#i-saveas"/></svg><svg><use href="#i-layout"/></svg><svg><use href="#i-layoutmgr"/></svg><svg><use href="#i-style"/></svg></div>
    <div class="tb w446"><svg class="on"><use href="#i-hand"/></svg><svg><use href="#i-pansel"/></svg><svg><use href="#i-zin"/></svg><svg><use href="#i-zout"/></svg><svg class="off"><use href="#i-z11"/></svg><svg><use href="#i-zfull"/></svg><svg><use href="#i-zsel"/></svg><svg><use href="#i-zlay"/></svg><svg><use href="#i-zlast"/></svg><svg class="off"><use href="#i-znext"/></svg><svg><use href="#i-view"/></svg><svg><use href="#i-bookmark"/></svg><svg><use href="#i-bookmarks"/></svg><svg><use href="#i-reload"/></svg></div>
    <div class="tb w416"><svg><use href="#i-ident"/></svg><svg class="off"><use href="#i-action"/></svg><i class="dd"></i><svg><use href="#i-select"/></svg><i class="dd"></i><svg><use href="#i-selform"/></svg><i class="dd"></i><svg><use href="#i-desel"/></svg><svg><use href="#i-table"/></svg><svg><use href="#i-abacus"/></svg><svg><use href="#i-gear"/></svg><svg><use href="#i-sigma"/></svg><svg><use href="#i-measure"/></svg><i class="dd"></i><svg><use href="#i-tip"/></svg><b class="more">»</b></div>
    <div class="tb last"><svg><use href="#i-help"/></svg></div>
  </div>
  <div class="row">
    <div class="tb w396"><svg class="off"><use href="#i-edits"/></svg><svg><use href="#i-pencil"/></svg><svg class="off"><use href="#i-savepen"/></svg><svg class="off"><use href="#i-points"/></svg><svg class="off"><use href="#i-vertex"/></svg><i class="dd"></i><svg class="off"><use href="#i-attr"/></svg><svg class="off"><use href="#i-trash"/></svg><svg class="off"><use href="#i-cut"/></svg><svg class="off"><use href="#i-copy"/></svg><svg class="off"><use href="#i-paste"/></svg><svg class="off sm"><use href="#i-undo"/></svg><svg class="off sm"><use href="#i-redo"/></svg></div>
    <div class="tb w291"><svg><use href="#i-abc"/></svg><svg><use href="#i-chart"/></svg><svg><use href="#i-labsel"/></svg><svg class="off"><use href="#i-labpin"/></svg><svg class="off"><use href="#i-labeye"/></svg><svg class="off"><use href="#i-labmove"/></svg><svg class="off"><use href="#i-labrot"/></svg><svg class="off"><use href="#i-labedit"/></svg><svg><use href="#i-easy"/></svg></div>
    <div class="tb w168"><svg><use href="#i-hex"/></svg><svg><use href="#i-tri"/></svg><svg><use href="#i-globeadd"/></svg><svg><use href="#i-globefind"/></svg><svg><use href="#i-globebin"/></svg></div>
    <div class="tb w225"><svg><use href="#i-python"/></svg><svg><use href="#i-ipy"/></svg><svg><use href="#i-hammer"/></svg><svg><use href="#i-rotate"/></svg><i class="dd"></i><svg><use href="#i-drawer"/></svg><svg><use href="#i-iface"/></svg><b class="more">»</b></div>
    <div class="tb last"><svg class="mag"><use href="#i-magnet"/></svg><b class="more">»</b></div>
  </div>
  <div class="row">
    <div class="tb w563"><svg class="off"><use href="#i-ruler"/></svg><svg class="off"><use href="#i-movepts"/></svg><i class="dd"></i><svg class="off"><use href="#i-brot"/></svg><svg class="off"><use href="#i-simpl"/></svg><svg class="off"><use href="#i-ring"/></svg><svg class="off"><use href="#i-part"/></svg><svg class="off"><use href="#i-ring"/></svg><svg class="off"><use href="#i-delring"/></svg><svg class="off"><use href="#i-delpart"/></svg><svg class="off"><use href="#i-reshape"/></svg><svg class="off"><use href="#i-offset"/></svg><svg class="off"><use href="#i-split"/></svg><svg class="off"><use href="#i-splitf"/></svg><svg class="off"><use href="#i-splitf"/></svg><svg class="off"><use href="#i-merge"/></svg><svg class="off"><use href="#i-mergea"/></svg><svg class="off"><use href="#i-rotsym"/></svg><i class="dd"></i></div>
    <div class="tb w227"><svg class="off"><use href="#i-curve"/></svg><i class="dd"></i><svg class="off"><use href="#i-circle"/></svg><i class="dd"></i><svg class="off"><use href="#i-ellipse"/></svg><i class="dd"></i><svg class="off"><use href="#i-rect"/></svg><i class="dd"></i><svg class="off"><use href="#i-poly"/></svg><i class="dd"></i></div>
    <div class="tb w74"><svg><use href="#i-qfind"/></svg><svg><use href="#i-mapbrush"/></svg></div>
    <div class="tb w43"><svg><use href="#i-profile"/></svg></div>
    <div class="tb w184"><svg><use href="#i-spectrum"/></svg></div>
    <div class="tb last"><svg><use href="#i-mapblue"/></svg></div>
  </div>

  <main class="main">
    <aside class="side">
      <div class="vtb"><svg><use href="#i-addlayer"/></svg><svg><use href="#i-box"/></svg><svg><use href="#i-newshp"/></svg><svg><use href="#i-feather"/></svg><svg><use href="#i-chip"/></svg></div>
      <div class="vtb second"><svg><use href="#i-cross"/></svg></div>
    </aside>

    <section class="left">
      <div class="dock-title"><span>Layers</span><svg><use href="#i-float"/></svg><svg><use href="#i-close"/></svg></div>
      <div class="ptb"><svg class="act"><use href="#i-brushy"/></svg><svg><use href="#i-group"/></svg><svg><use href="#i-eye"/></svg><svg><use href="#i-filter"/></svg><svg><use href="#i-epsf"/></svg><i class="dd"></i><svg><use href="#i-expand"/></svg><svg><use href="#i-collapse"/></svg><svg><use href="#i-remove"/></svg></div>
      <div class="layers">
        <div class="lrow"><svg class="cb"><use href="#i-check"/></svg><span class="ring"></span><b>airports copy</b></div>
        <div class="lrow sel"><svg class="cb"><use href="#i-check"/></svg><span class="sw"></span><b class="u">airports</b></div>
      </div>
      <div class="dock-title second"><span>Browser</span><svg><use href="#i-float"/></svg><svg><use href="#i-close"/></svg></div>
      <div class="ptb btb"><svg><use href="#i-addsel"/></svg><svg><use href="#i-reload"/></svg><svg><use href="#i-filter"/></svg><svg><use href="#i-collapse"/></svg><svg><use href="#i-info"/></svg></div>
      <div class="browser">
        <div class="btree">
          <div class="brow"><svg class="c"><use href="#i-chev"/></svg><svg class="st"><use href="#i-star"/></svg><span>Favorites</span></div>
          <div class="brow in"><svg class="c g"><use href="#i-right"/></svg><svg class="fo"><use href="#i-folder"/></svg><span>C:\Users\anita\.qgis2\python\plug</span></div>
          <div class="brow in"><svg class="c g"><use href="#i-right"/></svg><svg class="fo"><use href="#i-folder"/></svg><span>C:\Users\anita\Documents\BitBuc</span></div>
        </div>
        <div class="vs"><svg class="rot"><use href="#i-chev"/></svg><span></span><svg><use href="#i-chev"/></svg></div>
        <div class="hs"><svg class="rot"><use href="#i-right"/></svg><span></span><svg><use href="#i-right"/></svg></div>
      </div>
    </section>

    <section class="map">
      <svg viewBox="0 0 413 548"><g transform="translate(52.300,155.300) scale(.33333)">
        <path d="M36 608L216 176 390 55 415 57 669 97 1035 487 200 613 171 615z" fill="#4779b5" stroke="#2c4f80" stroke-width="3"/>
        <use href="#p" x="390" y="56"/><use href="#p" x="392" y="83"/><use href="#p" x="468" y="82"/><use href="#p" x="433" y="101"/><use href="#p" x="410" y="122"/><use href="#p" x="406" y="145"/><use href="#p" x="408" y="162"/><use href="#p" x="389" y="174"/><use href="#p" x="567" y="92"/><use href="#p" x="669" y="98"/><use href="#p" x="533" y="128"/><use href="#p" x="561" y="161"/><use href="#p" x="297" y="123"/><use href="#p" x="311" y="137"/><use href="#p" x="330" y="174"/><use href="#p" x="216" y="176"/><use href="#p" x="237" y="186"/><use href="#p" x="408" y="210"/><use href="#p" x="475" y="179"/><use href="#p" x="479" y="191"/><use href="#p" x="558" y="215"/><use href="#p" x="636" y="170"/><use href="#p" x="640" y="172"/><use href="#p" x="648" y="177"/><use href="#p" x="614" y="186"/><use href="#p" x="612" y="194"/><use href="#p" x="675" y="200"/><use href="#p" x="720" y="218"/><use href="#p" x="747" y="230"/><use href="#p" x="336" y="242"/><use href="#p" x="299" y="278"/><use href="#p" x="353" y="274"/><use href="#p" x="414" y="258"/><use href="#p" x="499" y="250"/><use href="#p" x="497" y="252"/><use href="#p" x="492" y="255"/><use href="#p" x="422" y="303"/><use href="#p" x="285" y="332"/><use href="#p" x="375" y="329"/><use href="#p" x="498" y="326"/><use href="#p" x="599" y="276"/><use href="#p" x="687" y="272"/><use href="#p" x="622" y="302"/><use href="#p" x="608" y="305"/><use href="#p" x="613" y="312"/><use href="#p" x="612" y="315"/><use href="#p" x="610" y="317"/><use href="#p" x="678" y="318"/><use href="#p" x="695" y="342"/><use href="#p" x="580" y="348"/><use href="#p" x="586" y="349"/><use href="#p" x="606" y="319"/><use href="#p" x="621" y="362"/><use href="#p" x="579" y="383"/><use href="#p" x="510" y="380"/><use href="#p" x="504" y="396"/><use href="#p" x="435" y="407"/><use href="#p" x="473" y="423"/><use href="#p" x="360" y="417"/><use href="#p" x="819" y="359"/><use href="#p" x="903" y="338"/><use href="#p" x="902" y="350"/><use href="#p" x="909" y="380"/><use href="#p" x="918" y="392"/><use href="#p" x="962" y="429"/><use href="#p" x="983" y="427"/><use href="#p" x="998" y="433"/><use href="#p" x="994" y="473"/><use href="#p" x="1035" y="485"/><use href="#p" x="181" y="443"/><use href="#p" x="186" y="467"/><use href="#p" x="561" y="462"/><use href="#p" x="426" y="492"/><use href="#p" x="327" y="551"/><use href="#p" x="231" y="586"/><use href="#p" x="171" y="613"/><use href="#p" x="36" y="608"/>
      </g></svg>
    </section>

    <section class="right">
      <div class="dock-title"><span>Layer Styling</span><svg><use href="#i-float"/></svg><svg><use href="#i-close"/></svg></div>
      <div class="combo c-layer"><svg class="ic"><use href="#i-dots"/></svg><span>airports</span><svg class="ar"><use href="#i-down"/></svg></div>
      <div class="styler">
        <div class="tabs"><div class="tab first"><svg><use href="#i-rainbow"/></svg></div><svg><use href="#i-abc"/></svg><svg><use href="#i-cube"/></svg><svg><use href="#i-blocks"/></svg><svg><use href="#i-history"/></svg></div>
        <div class="body">
          <div class="combo c-sym"><svg class="ic"><use href="#i-stack"/></svg><span>Single symbol</span><svg class="ar"><use href="#i-down"/></svg></div>
          <div class="symrow">
            <div class="stree">
              <div class="srow"><svg><use href="#i-chev"/></svg><span class="sq"></span><b>Marker</b></div>
              <div class="srow l1"><svg><use href="#i-chev"/></svg><div class="hl"><span class="sq lit"></span><span>Geometry generator</span></div></div>
              <div class="srow l2"><svg><use href="#i-chev"/></svg><span class="sq"></span><b>Fill</b></div>
              <div class="srow l3"><span class="sq"></span><span>Simple fill</span></div>
            </div>
            <svg class="preview" viewBox="0 0 100 100"><path d="M50.500 0v100M0 50.500h100" stroke="#888"/></svg>
          </div>
          <div class="btns"><span><svg><use href="#i-plus"/></svg></span><span class="dis"><svg><use href="#i-minus"/></svg></span><span><svg><use href="#i-unlock"/></svg></span><span><svg><use href="#i-dup"/></svg></span><span class="dis"><svg><use href="#i-up3"/></svg></span><span class="dis"><svg><use href="#i-dn3"/></svg></span></div>
          <div class="form f1"><label>Symbol layer type</label><div class="combo"><span>Geometry generator</span><svg class="ar"><use href="#i-down"/></svg></div></div>
          <div class="form f2"><label>Geometry type</label><div class="combo"><svg class="ic"><use href="#i-polyg"/></svg><span>Polygon / MultiPolygon</span><svg class="ar"><use href="#i-down"/></svg></div></div>
          <div class="edrow">
            <div class="editor"><code>convex_hull( collect( <em>$</em>geometry) )</code><div class="hs"><svg class="rot"><use href="#i-right"/></svg><span></span><svg><use href="#i-right"/></svg></div></div>
            <span class="sbtn eps">ε</span>
          </div>
          <div class="checks"><svg class="cb"><use href="#i-check"/></svg><span class="t-en">Enable layer</span><svg class="ddo"><use href="#i-ddo"/></svg><svg class="cb"><use href="#i-uncheck"/></svg><span class="t-dr">Draw effects</span><span class="sbtn dis"><svg><use href="#i-star"/></svg></span></div>
          <div class="rendering"><i></i><b>Layer Rendering</b></div>
          <div class="foot"><span class="sbtn or"><svg><use href="#i-undo"/></svg></span><span class="sbtn gr"><svg><use href="#i-redo"/></svg></span><svg class="cb"><use href="#i-check"/></svg><span class="live">Live update</span><span class="apply">Apply</span></div>
        </div>
      </div>
      <div class="btabs"><span>Processing Toolbox</span><span class="cur">Layer Styling</span></div>
    </section>
  </main>

  <footer class="status">
    <div class="inp locate"><svg viewBox="0 0 14 14"><circle cx="5.500" cy="5.500" r="4.300" fill="none" stroke="#888" stroke-width="1.200"/><path d="M8.700 8.700l4.300 4.300" stroke="#888" stroke-width="1.500"/></svg><span>Type to locate (Ctrl+K)</span></div>
    <label class="s-co">Coordinate</label><div class="inp i-co"><span>-6139457,11146563</span></div><svg class="mouse"><use href="#i-mouse"/></svg>
    <label class="s-sc">Scale</label><div class="inp i-sc"><span>:31423868</span><svg class="ar"><use href="#i-down"/></svg></div><svg class="lock"><use href="#i-lock"/></svg>
    <label class="s-ma">Magnifier</label><div class="inp i-ma"><span>100%</span><i class="spin"></i></div>
    <label class="s-ro">Rotation</label><div class="inp i-ro"><span>0,0 °</span><i class="spin"></i></div>
    <svg class="cb"><use href="#i-check"/></svg><label class="s-re">Render</label>
    <svg class="crs"><use href="#i-crs"/></svg><label class="s-ep">EPSG:2964</label><svg class="bub"><use href="#i-bubble"/></svg><svg class="puz"><use href="#i-puzzle"/></svg><i class="grip"></i>
  </footer>
</div>
</body>
</html>
```
FILE: styles.css
```css
* { box-sizing: border-box; }
body { margin: 0; width: 1136px; height: 733px; overflow: hidden; font: 12px "Open Sans", "Noto Sans", sans-serif; color: #000; }
svg { display: block; flex: none; }
svg text { font-family: "DejaVu Sans", sans-serif; }
svg text.serif { font-family: "Liberation Serif", serif; }
svg text.mono { font-family: "Liberation Mono", monospace; }
.defs { position: absolute; width: 0; height: 0; }
.window { width: 1136px; height: 733px; border: 1px solid #23232b; background: #f0f0f0; display: flex; flex-direction: column; }
span, b, label { white-space: pre; }

.title { height: 29px; background: #fff; display: flex; align-items: center; padding-left: 8px; flex: none; }
.logo { width: 17px; height: 17px; }
.title-text { margin-left: 4px; letter-spacing: -.35px; }
.winbtns { width: 120px; height: 28px; margin-left: auto; margin-right: 3px; }
.menu { height: 22px; background: #fff; display: grid; grid-template-columns: 53px 36px 41px 44px 58px 55px 49px 48px 64px 40px 73px 50px; padding-left: 8px; line-height: 23px; letter-spacing: -.3px; flex: none; }

.row { height: 34px; display: flex; border-bottom: 1px solid #b4b4b4; flex: none; }
.tb { display: flex; align-items: center; padding-left: 9.5px; border-right: 1px solid #a8a8a8; flex: none; position: relative; }
.tb::before, .vtb::before { content: ""; position: absolute; left: 4px; top: 4px; width: 2px; height: 26px; background: repeating-linear-gradient(#b4b4b4 0 2px, transparent 2px 4px); }
.tb > svg { width: 24px; height: 24px; margin: 0 3.5px; }
.tb > svg.sm { width: 20px; height: 20px; margin: 0 5.5px; color: #999; }
.tb > svg.on { width: 31px; height: 30px; margin: 0; padding: 2px 3px; background: #cce4f7; border: 1px solid #99c9ef; }
.off { filter: grayscale(1) opacity(.34); }
.w229 { width: 229px; } .w446 { width: 446px; } .w416 { width: 416px; }
.w396 { width: 396px; } .w291 { width: 291px; } .w168 { width: 168px; } .w225 { width: 225px; }
.w563 { width: 563px; } .w227 { width: 227px; } .w74 { width: 74px; } .w43 { width: 43px; } .w184 { width: 184px; }
.last { border-right: 0; flex: 1; min-width: 0; }
.dd { width: 12px; height: 4px; flex: none; }
.dd::before { content: ""; display: block; margin-left: 2px; width: 0; border: 3.5px solid transparent; border-top: 4px solid #333; border-bottom: 0; }
.off + .dd::before { border-top-color: #666; }
.more { width: 10px; text-align: center; font: 700 14px/20px "DejaVu Sans", sans-serif; margin: -3px 0 0 5px; flex: none; }
.mag + .more { margin-left: 2px; }

.main { height: 549px; display: flex; flex: none; }
.side { width: 35px; flex: none; }
.vtb { position: relative; height: 162px; padding: 12px 0 0 5px; border-bottom: 1px solid #b4b4b4; }
.vtb.second { border: 0; padding-top: 12px; height: 60px; }
.vtb::before { left: 4px; top: 3px; width: 26px; height: 2px; background: repeating-linear-gradient(90deg, #b4b4b4 0 2px, transparent 2px 4px); }
.vtb > svg { width: 24px; height: 24px; margin-bottom: 6.4px; }

.left { width: 262px; flex: none; padding-top: 1px; }
.dock-title { height: 25px; background: #d9d9d9; border: 1px solid #b9b9b9; display: flex; align-items: center; padding: 0 4px; letter-spacing: -.1px; }
.dock-title span { flex: 1; padding-top: 2px; font-size: 11.5px; }
.dock-title svg { width: 14px; height: 14px; margin-left: 7px; }
.dock-title.second { margin-top: 5px; }
.ptb { height: 28px; display: flex; align-items: center; padding-left: 1px; }
.ptb > svg { width: 16px; height: 16px; margin: 0 3.7px; flex: none; }
.ptb > svg.act { width: 23px; height: 22px; margin: 0; padding: 2px; background: #cce4f7; border: 1px solid #99c9ef; }
.ptb .dd { margin-left: -1px; }
.btb { height: 29px; }
.layers { height: 366px; background: #fff; border: 1px solid #82878f; }
.lrow { display: flex; align-items: center; height: 20px; margin-left: 20px; padding-left: 3px; }
.lrow.sel { background: #d9d9d9; }
.cb { width: 13px; height: 13px; }
.ring { width: 14px; height: 14px; border: 1.6px solid #444; border-radius: 50%; margin: 0 7px; }
.sw { width: 16px; height: 16px; background: #2f75bb; margin: 0 6px; }
.lrow b { font-size: 12px; letter-spacing: -.58px; }
.lrow b.u { letter-spacing: -.45px; text-decoration: underline; }
.browser { height: 70px; border: 1px solid #82878f; background: #fff; display: grid; grid-template: 52px 16px / 1fr 17px; overflow: hidden; }
.btree { overflow: hidden; }
.brow { display: flex; align-items: center; height: 20px; padding-left: 5px; letter-spacing: -.28px; }
.brow.in { padding-left: 25px; }
.c { width: 10px; height: 10px; }
.c.g { color: #999; }
.st { width: 16px; height: 16px; margin: 0 6px 0 8px; }
.fo { width: 16px; height: 14px; margin: 0 6px 0 8px; }
.vs { background: #f0f0f0; display: flex; flex-direction: column; align-items: center; padding-top: 4px; }
.vs svg { width: 10px; height: 10px; }
.vs span { width: 15px; height: 18px; margin: 3px 0 4px; background: #cdcdcd; }
.rot { transform: rotate(180deg); }
.hs { grid-column: 1 / -1; background: #f0f0f0; display: flex; align-items: center; color: #444; }
.hs svg { width: 10px; height: 10px; }
.browser .hs { padding: 0 20px 0 3px; }
.browser .hs span { width: 105px; height: 15px; background: #cdcdcd; margin: 0 auto 0 4px; }

.map { width: 414px; margin-left: 4px; background: #fff; border: 1px solid #82878f; border-bottom: 0; border-right-color: #ddd; flex: none; }
.map svg { width: 413px; height: 548px; }

.right { width: 415px; margin-left: 4px; padding-top: 1px; flex: none; font-size: 11.5px; }
.right > .dock-title { letter-spacing: .05px; padding-right: 4px; }
.combo { display: flex; align-items: center; background: #e1e1e1; border: 1px solid #adadad; font: 11px "DejaVu Sans Condensed", "DejaVu Sans", sans-serif; padding: 0 3px; }
.combo .ic { width: 14px; height: 14px; margin: 0 3px; }
.combo .ar { width: 10px; height: 10px; margin-left: auto; color: #444; }
.c-layer { height: 22px; margin: 5px 4px 0 3px; }
.c-sym { height: 22px; width: 368px; }
.c-layer span, .c-sym span { font: 11.5px "Open Sans", sans-serif; letter-spacing: -.55px; }
.c-sym .ic { margin-right: 2px; }
.styler { display: flex; margin: 6px 0 0 3px; height: 466px; }
.tabs { width: 38px; background: #5e5e5e; flex: none; display: flex; flex-direction: column; align-items: center; padding-right: 6px; }
.tab.first { width: 38px; height: 34px; background: #f0f0f0; display: flex; align-items: center; justify-content: center; margin: 0 -6px 6px 0; padding-right: 2px; }
.tabs svg { width: 22px; height: 22px; margin-bottom: 12px; }
.tab.first svg { margin: 0; }
.body { width: 369px; margin-left: 3px; font: 11px "DejaVu Sans Condensed", "DejaVu Sans", sans-serif; }
.symrow { display: flex; margin-top: 6px; }
.stree { width: 256px; height: 136px; background: #fff; border: 1px solid #82878f; font: 12px "Open Sans", sans-serif; letter-spacing: -.4px; }
.stree b { letter-spacing: -.3px; }
.srow { height: 20px; display: flex; align-items: center; padding-left: 5px; }
.srow > svg { width: 10px; height: 10px; margin-right: 8px; }
.srow.l1 { padding-left: 25px; } .srow.l2 { padding-left: 45px; } .srow.l3 { padding-left: 83px; }
.srow.l1 > svg { margin-right: 5px; }
.sq { width: 16px; height: 16px; background: #4779b5; border: 1px solid #3c6aa0; margin-right: 6px; flex: none; }
.sq.lit { background: #2f7ac2; }
.hl { flex: 1; height: 20px; background: #cce8ff; display: flex; align-items: center; padding-left: 3px; }
.preview { width: 100px; height: 100px; margin: 18px 0 0 9px; }
.btns { display: flex; gap: 8px; margin: 7px 0 0 1px; }
.btns span { width: 26px; height: 22px; background: #e1e1e1; border: 1px solid #adadad; display: flex; align-items: center; justify-content: center; }
.btns svg { width: 14px; height: 14px; }
.btns .dis, .sbtn.dis { background: #ccc; border-color: #bfbfbf; }
.form { display: flex; align-items: center; }
.f1 { border-top: 1px solid #a0a0a0; margin-top: 7px; padding-top: 9px; width: 368px; }
.f1 label { width: 87px; letter-spacing: -.2px; }
.f1 .combo { width: 271px; height: 20px; }
.f2 { margin-top: 12px; padding-left: 10px; letter-spacing: -.2px; }
.f2 label { width: 78px; }
.f2 .combo { width: 261px; height: 22px; letter-spacing: -.13px; }
.f2 .ic { width: 16px; height: 12px; margin: -4px 2px 0 1px; }
.edrow { display: flex; margin: 6px 0 0 10px; align-items: flex-start; }
.editor { width: 310px; height: 89px; border: 1px solid #707070; background: linear-gradient(90deg, #f0f0f0 14px, #fff 14px); display: flex; flex-direction: column; justify-content: space-between; }
.editor code { font: 12px/19px "DejaVu Sans Condensed", sans-serif; color: #4a93a5; padding-left: 23px; white-space: pre; letter-spacing: .28px; }
.editor em { font-style: normal; color: #000; }
.editor .hs { height: 16px; padding: 0 3px; }
.editor .hs span { width: 40px; height: 15px; background: #cdcdcd; margin: 0 auto 0 4px; }
.sbtn { width: 21px; height: 20px; background: #e1e1e1; border: 1px solid #adadad; display: flex; align-items: center; justify-content: center; flex: none; }
.sbtn svg { width: 14px; height: 14px; }
.eps { margin: 1px 0 0 7px; font: 700 20px/16px "Liberation Serif", serif; color: #5d4668; padding-bottom: 3px; }
.sbtn.dis svg { filter: grayscale(1) opacity(.5); }
.checks { display: flex; align-items: center; margin-top: 15px; padding-left: 1px; letter-spacing: -.1px; }
.checks .cb { margin-right: 4px; }
.t-en { width: 74px; }
.ddo { width: 24px; height: 20px; margin-right: 39px; }
.t-dr { width: 75px; }
.rendering { display: flex; align-items: center; height: 20px; margin-top: 24px; font-size: 12px; padding-left: 5px; letter-spacing: -.48px; }
.rendering i { border: 6px solid transparent; border-left: 7px solid #333; border-right: 0; margin-right: 9px; }
.foot { display: flex; align-items: center; margin: 6px 2px 0 1px; letter-spacing: -.15px; }
.foot .sbtn { margin-right: 8px; }
.or svg { color: #ec7a3c; }
.gr svg { color: #6cb884; }
.foot .cb { margin: 0 4px 0 149px; }
.live { width: 68px; }
.apply { width: 74px; height: 21px; line-height: 20px; text-align: center; background: #e1e1e1; border: 1px solid #adadad; margin-left: auto; }
.btabs { display: flex; border-top: 1px solid #a0a0a0; margin-top: 3px; height: 21px; font: 11px "DejaVu Sans Condensed", sans-serif; align-items: flex-start; }
.btabs span { width: 112px; margin-left: 2px; height: 18px; line-height: 19px; text-align: center; border: 1px solid #d9d9d9; border-top: 0; letter-spacing: -.05px; }
.btabs .cur { width: 88px; margin: -1px 0 0; height: 21px; line-height: 23px; background: #fff; }

.status { flex: 1; border-top: 1px solid #d7d7d7; display: flex; align-items: center; font: 11px "DejaVu Sans Condensed", sans-serif; }
.inp { height: 20px; background: #fff; border: 1px solid #7a7a7a; display: flex; align-items: center; padding: 0 3px; flex: none; }
.locate { width: 200px; margin-left: 4px; margin-right: 90px; color: #777; font: 12px "Open Sans", sans-serif; padding-left: 7px; letter-spacing: -.5px; }
.locate svg { width: 14px; height: 14px; margin-right: 6px; }
label { flex: none; }
.s-co { width: 57px; letter-spacing: -.1px; } .i-co { width: 108px; letter-spacing: -.1px; }
.mouse { width: 16px; height: 16px; margin: 0 12px 0 3px; }
.s-sc { width: 29px; letter-spacing: -.2px; } .i-sc { width: 78px; padding-left: 2px; letter-spacing: -.1px; }
.i-sc .ar { width: 10px; height: 10px; margin-left: auto; color: #444; }
.lock { width: 14px; height: 16px; margin: 0 7px 0 10px; }
.s-ma { width: 48px; letter-spacing: -.3px; } .i-ma { width: 82px; margin-right: 8px; padding: 0 0 0 3px; }
.s-ro { width: 51px; } .i-ro { width: 80px; margin-right: 6px; padding: 0 0 0 2px; }
.spin { position: relative; width: 14px; height: 16px; margin: 0 1px 0 auto; border: 1px solid #999; background: linear-gradient(#f0f0f0 6px, #999 6px 7px, #f0f0f0 7px); }
.spin::before, .spin::after { content: ""; position: absolute; left: 3px; top: 2px; border: 3px solid transparent; border-top: 0; border-bottom: 3px solid #000; }
.spin::after { top: 9px; border-top: 3px solid #000; border-bottom: 0; }
.s-re { width: 54px; margin-left: 4px; }
.crs { width: 16px; height: 16px; margin-right: 2px; }
.s-ep { width: 69px; letter-spacing: -.1px; }
.bub { width: 18px; height: 18px; margin-right: 12px; }
.puz { width: 24px; height: 20px; }
.grip { width: 9px; height: 9px; margin: 14px 0 0 6px; background: radial-gradient(circle at 1px 1px, #aaa 1px, transparent 1.2px) 0 0 / 3px 3px; clip-path: polygon(100% 0, 100% 100%, 0 100%); }
```
